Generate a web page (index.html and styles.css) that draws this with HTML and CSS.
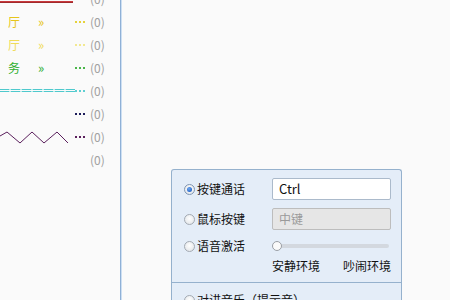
FILE: index.html
```html
<!DOCTYPE html>
<html lang="zh">
<head>
<meta charset="utf-8">
<link rel="stylesheet" href="styles.css">
</head>
<body>
<div class="app">
  <aside class="tree">
    <ul class="list">
      <li class="row"><span class="content"><span class="line red"></span></span><span class="dots"></span><span class="count">(0)</span></li>
      <li class="row c-yellow"><span class="content"><span class="ch">厅</span><span class="arrow">»</span></span><span class="dots"></span><span class="count">(0)</span></li>
      <li class="row c-lyellow"><span class="content"><span class="ch">厅</span><span class="arrow">»</span></span><span class="dots"></span><span class="count">(0)</span></li>
      <li class="row c-green"><span class="content"><span class="ch">务</span><span class="arrow">»</span></span><span class="dots"></span><span class="count">(0)</span></li>
      <li class="row c-cyan"><span class="content"><span class="line dbl"></span></span><span class="dots"></span><span class="count">(0)</span></li>
      <li class="row c-navy"><span class="content"></span><span class="dots"></span><span class="count">(0)</span></li>
      <li class="row c-purple"><span class="content"><svg class="zig" width="70" height="16" viewBox="0 0 70 16"><polyline points="0,5 7,1 20,12 32,1 44,12 57,1 68,12" fill="none" stroke="#5a1f5c" stroke-width="1"/></svg></span><span class="dots"></span><span class="count">(0)</span></li>
      <li class="row"><span class="content"></span><span class="dots none"></span><span class="count">(0)</span></li>
    </ul>
  </aside>
  <main class="main">
    <section class="panel">
      <div class="grid">
        <label class="opt"><span class="radio checked"></span>按键通话</label>
        <div class="input">Ctrl</div>
        <label class="opt"><span class="radio"></span>鼠标按键</label>
        <div class="input dis">中键</div>
        <label class="opt top"><span class="radio"></span>语音激活</label>
        <div class="sliderbox">
          <div class="slider"><span class="track"></span><span class="thumb"></span></div>
          <div class="scale"><span>安静环境</span><span>吵闹环境</span></div>
        </div>
      </div>
      <div class="sep"></div>
      <label class="opt last"><span class="radio"></span>对讲音乐（提示音）</label>
    </section>
  </main>
</div>
</body>
</html>
```

FILE: styles.css
```css
* { box-sizing: border-box; }
html, body {
  margin: 0;
  padding: 0;
  width: 450px;
  height: 300px;
  overflow: hidden;
  background: #fafafa;
  font-family: "Noto Sans CJK SC", "Noto Sans", sans-serif;
  font-size: 12px;
  color: #111;
}
.app {
  display: flex;
  height: 300px;
}
.tree {
  width: 121px;
  flex: none;
  border-right: 1px solid #8fb0d6;
  box-shadow: 1px 0 0 #cddff2;
  overflow: hidden;
}
.list {
  list-style: none;
  margin: -13px 0 0;
  padding: 0;
}
.row {
  height: 23px;
  display: flex;
  align-items: center;
}
.content {
  width: 75px;
  height: 23px;
  flex: none;
  display: flex;
  align-items: center;
  position: relative;
}
.ch {
  margin-left: 8px;
  width: 30px;
  line-height: 14px;
}
.arrow {
  font-size: 13px;
  line-height: 14px;
}
.dots {
  width: 11px;
  height: 2px;
  margin: 1px 4px 0 0;
  flex: none;
  background: repeating-linear-gradient(to right, var(--c, #999) 0 2px, transparent 2px 4px);
}
.dots.none { background: none; }
.count {
  color: #a0a0a0;
  font-size: 12px;
  line-height: 14px;
}
.line { display: block; }
.line.red {
  width: 73px;
  height: 2px;
  margin-top: 6px;
  background: #c8393c;
  border-bottom: 1px solid #a02a2c;
}
.line.dbl {
  width: 75px;
  height: 3px;
  background:
    repeating-linear-gradient(to right, #4fc9cd 0 9px, #b8eaea 9px 11px) top / 100% 1px no-repeat,
    repeating-linear-gradient(to right, #4fc9cd 0 9px, #b8eaea 9px 11px) bottom / 100% 1px no-repeat;
}
.zig { display: block; margin-top: 5px; }
.c-yellow { color: #e6c51a; --c: #e6d23a; }
.c-lyellow { color: #f0dc5a; --c: #f2e890; }
.c-green { color: #2fae2f; --c: #49b649; }
.c-cyan { --c: #5fcfd2; }
.c-navy { --c: #1c1c5a; }
.c-purple { --c: #5a1f5c; }

.main {
  flex: 1;
  padding: 169px 0 0 50px;
}
.panel {
  width: 231px;
  background: #e4edf8;
  border: 1px solid #95b1cd;
  border-bottom: none;
  border-radius: 3px 3px 0 0;
  height: 140px;
}
.grid {
  display: grid;
  grid-template-columns: 88px 119px;
  grid-auto-rows: auto;
  row-gap: 8px;
  padding: 8px 10px 8px 12px;
}
.opt {
  display: flex;
  align-items: center;
  height: 22px;
  line-height: 16px;
  color: #111;
}
.opt.top { height: 16px; align-self: start; }
.radio {
  width: 11px;
  height: 11px;
  border-radius: 50%;
  border: 1px solid #a3aab3;
  background: radial-gradient(circle at 50% 40%, #ffffff 0, #e4e7ea 80%);
  margin-right: 2px;
  flex: none;
  position: relative;
}
.radio.checked {
  border-color: #7f95b2;
}
.radio.checked::after {
  content: "";
  position: absolute;
  left: 2px;
  top: 2px;
  width: 5px;
  height: 5px;
  border-radius: 50%;
  background: radial-gradient(circle at 40% 35%, #6fa7f0 0, #1d5fc6 80%);
}
.input {
  height: 22px;
  border: 1px solid #abbacb;
  border-radius: 2px;
  background: #fff;
  padding: 0 6px;
  line-height: 20px;
  font-family: "Noto Sans CJK SC", "Noto Sans", sans-serif;
  font-size: 13px;
  color: #111;
}
.input.dis {
  background: #e6e6e6;
  border-color: #bdbdbd;
  color: #9a9a9a;
  font-size: 12px;
}
.sliderbox {
  display: flex;
  flex-direction: column;
}
.slider {
  height: 16px;
  position: relative;
  display: flex;
  align-items: center;
}
.track {
  display: block;
  width: 117px;
  height: 4px;
  border-radius: 2px;
  background: #d3d8df;
}
.thumb {
  position: absolute;
  left: 0;
  top: 3px;
  width: 10px;
  height: 10px;
  border-radius: 50%;
  border: 1px solid #9a9fa6;
  background: #fafafa;
}
.scale {
  display: flex;
  justify-content: space-between;
  margin-top: 4px;
  line-height: 16px;
}
.sep {
  height: 1px;
  background: #95b1cd;
}
.opt.last {
  margin: 9px 0 0 12px;
  height: 16px;
}
```
